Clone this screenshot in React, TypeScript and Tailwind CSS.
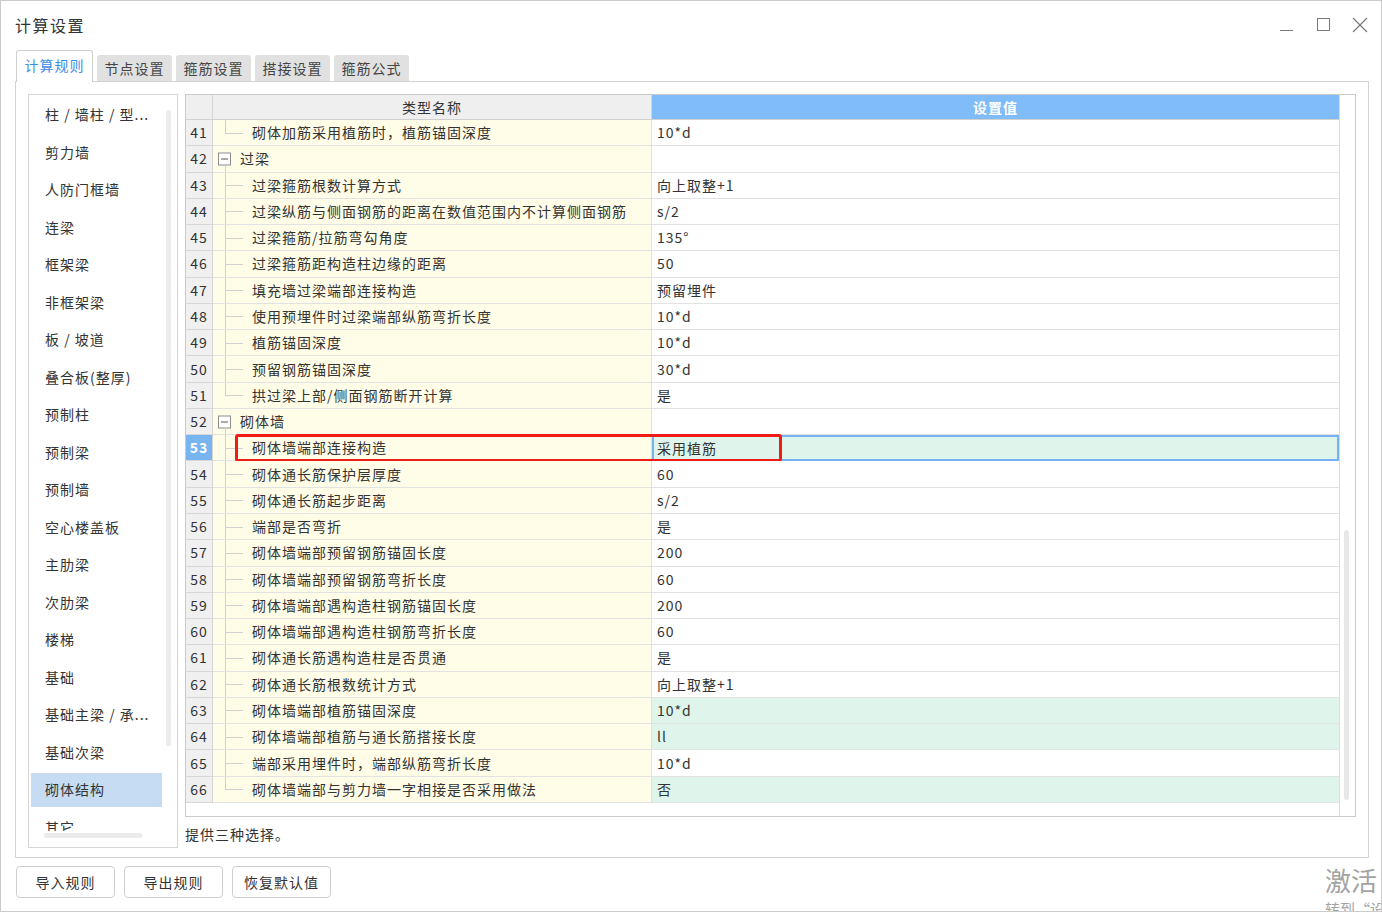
import React from "react";

type Row = {
  n: number;
  name: string;
  value?: string;
  kind: "child" | "group";
  last?: boolean;
  mint?: boolean;
  selected?: boolean;
};

const rows: Row[] = [
  { n: 41, name: "砌体加筋采用植筋时，植筋锚固深度", value: "10*d", kind: "child", last: true },
  { n: 42, name: "过梁", kind: "group" },
  { n: 43, name: "过梁箍筋根数计算方式", value: "向上取整+1", kind: "child" },
  { n: 44, name: "过梁纵筋与侧面钢筋的距离在数值范围内不计算侧面钢筋", value: "s/2", kind: "child" },
  { n: 45, name: "过梁箍筋/拉筋弯勾角度", value: "135°", kind: "child" },
  { n: 46, name: "过梁箍筋距构造柱边缘的距离", value: "50", kind: "child" },
  { n: 47, name: "填充墙过梁端部连接构造", value: "预留埋件", kind: "child" },
  { n: 48, name: "使用预埋件时过梁端部纵筋弯折长度", value: "10*d", kind: "child" },
  { n: 49, name: "植筋锚固深度", value: "10*d", kind: "child" },
  { n: 50, name: "预留钢筋锚固深度", value: "30*d", kind: "child" },
  { n: 51, name: "拱过梁上部/侧面钢筋断开计算", value: "是", kind: "child", last: true },
  { n: 52, name: "砌体墙", kind: "group" },
  { n: 53, name: "砌体墙端部连接构造", value: "采用植筋", kind: "child", mint: true, selected: true },
  { n: 54, name: "砌体通长筋保护层厚度", value: "60", kind: "child" },
  { n: 55, name: "砌体通长筋起步距离", value: "s/2", kind: "child" },
  { n: 56, name: "端部是否弯折", value: "是", kind: "child" },
  { n: 57, name: "砌体墙端部预留钢筋锚固长度", value: "200", kind: "child" },
  { n: 58, name: "砌体墙端部预留钢筋弯折长度", value: "60", kind: "child" },
  { n: 59, name: "砌体墙端部遇构造柱钢筋锚固长度", value: "200", kind: "child" },
  { n: 60, name: "砌体墙端部遇构造柱钢筋弯折长度", value: "60", kind: "child" },
  { n: 61, name: "砌体通长筋遇构造柱是否贯通", value: "是", kind: "child" },
  { n: 62, name: "砌体通长筋根数统计方式", value: "向上取整+1", kind: "child" },
  { n: 63, name: "砌体墙端部植筋锚固深度", value: "10*d", kind: "child", mint: true },
  { n: 64, name: "砌体墙端部植筋与通长筋搭接长度", value: "ll", kind: "child", mint: true },
  { n: 65, name: "端部采用埋件时，端部纵筋弯折长度", value: "10*d", kind: "child" },
  { n: 66, name: "砌体墙端部与剪力墙一字相接是否采用做法", value: "否", kind: "child", last: true, mint: true },
];

const categories = [
  "柱 / 墙柱 / 型...",
  "剪力墙",
  "人防门框墙",
  "连梁",
  "框架梁",
  "非框架梁",
  "板 / 坡道",
  "叠合板(整厚)",
  "预制柱",
  "预制梁",
  "预制墙",
  "空心楼盖板",
  "主肋梁",
  "次肋梁",
  "楼梯",
  "基础",
  "基础主梁 / 承...",
  "基础次梁",
  "砌体结构",
  "其它",
];

const tabs = ["计算规则", "节点设置", "箍筋设置", "搭接设置", "箍筋公式"];

function TreeCell({ row }: { row: Row }) {
  if (row.kind === "group") {
    return (
      <div className="relative flex h-full items-center pl-[27px]">
        <div className="absolute left-[5px] top-1/2 flex h-[13px] w-[13px] -translate-y-1/2 items-center justify-center border border-[#8c8c8c] bg-white">
          <div className="h-px w-[7px] bg-[#555]" />
        </div>
        <div className="absolute bottom-0 left-[12px] h-[6px] w-px bg-[#d0d0d0]" />
        <span>{row.name}</span>
      </div>
    );
  }
  return (
    <div className="relative flex h-full items-center pl-[39px]">
      <div
        className={
          row.last
            ? "absolute left-[12px] top-0 h-1/2 w-px bg-[#d0d0d0]"
            : "absolute left-[12px] top-0 h-full w-px bg-[#d0d0d0]"
        }
      />
      <div className="absolute left-[12px] top-1/2 h-px w-[18px] bg-[#d0d0d0]" />
      <span className="whitespace-nowrap">{row.name}</span>
    </div>
  );
}

function TableRow({ row }: { row: Row }) {
  return (
    <div className="relative grid h-[26.28px] grid-cols-[27px_439px_687px]">
      <div
        className={
          row.selected
            ? "flex items-center justify-center border-b border-r border-[#d6d6d6] bg-[#78b4f0] font-bold text-white"
            : "flex items-center justify-center border-b border-r border-[#d6d6d6] bg-[#f0f0f0]"
        }
      >
        {row.n}
      </div>
      <div className="border-b border-r border-[#e2e2e2] bg-[#fffde8]">
        <TreeCell row={row} />
      </div>
      <div
        className={
          row.selected
            ? "flex items-center border-2 border-[#74b2f2] bg-[#dff5ec] pl-[3px]"
            : row.mint
              ? "flex items-center border-b border-[#e2e2e2] bg-[#dff5ec] pl-[5px]"
              : "flex items-center border-b border-[#e2e2e2] bg-white pl-[5px]"
        }
      >
        {row.value}
      </div>
      {row.selected && (
        <div className="pointer-events-none absolute left-[49px] top-[-1px] h-[28px] w-[547px] rounded-[3px] border-[3px] border-[#ee1c14]" />
      )}
    </div>
  );
}

export default function App() {
  return (
    <div className="relative h-[912px] w-[1382px] overflow-hidden border border-[#cbcbcb] bg-white px-[14px] font-['Noto_Sans_CJK_SC',sans-serif] text-[14px] tracking-[1px] text-[#333]">
      {/* title bar */}
      <div className="flex h-[49px] items-start justify-between pt-[11px]">
        <span className="text-[16px] leading-[26px] tracking-[1.5px] text-[#333]">计算设置</span>
        <div className="mr-[-2px] mt-[4px] flex items-center gap-[20px]">
          <svg width="16" height="16" viewBox="0 0 16 16" className="mt-[2px]">
            <line x1="1" y1="12.5" x2="14" y2="12.5" stroke="#7a7a7a" strokeWidth="1" />
          </svg>
          <svg width="16" height="16" viewBox="0 0 16 16">
            <rect x="2.5" y="1.5" width="12" height="12" fill="none" stroke="#7a7a7a" strokeWidth="1" />
          </svg>
          <svg width="18" height="18" viewBox="0 0 18 18">
            <line x1="2" y1="2" x2="16" y2="16" stroke="#7a7a7a" strokeWidth="1.2" />
            <line x1="16" y1="2" x2="2" y2="16" stroke="#7a7a7a" strokeWidth="1.2" />
          </svg>
        </div>
      </div>

      {/* tabs */}
      <div className="ml-[1px] flex h-[31px] items-end gap-[4px]">
        {tabs.map((t, i) =>
          i === 0 ? (
            <div
              key={t}
              className="relative z-10 -mb-px flex h-[32px] w-[77px] items-center justify-center rounded-t-[3px] border border-b-0 border-[#cfcfcf] bg-white pb-[2px] text-[#3b8de6]"
            >
              {t}
            </div>
          ) : (
            <div
              key={t}
              className="flex h-[26px] w-[75px] items-center justify-center rounded-t-[3px] bg-[#e1e1e1] text-[#444]"
            >
              {t}
            </div>
          )
        )}
      </div>

      {/* panel */}
      <div className="flex h-[777px] w-[1354px] gap-[7px] border border-[#d3d3d3] pl-[12px] pt-[12px]">
        {/* category list */}
        <div className="relative h-[754px] w-[150px] border border-[#d6d6d6]">
          <div className="h-[736px] overflow-hidden pt-[1px]">
            {categories.map((c) => (
              <div key={c} className="h-[37.5px] px-[2px] py-[1.75px]">
                <div
                  className={
                    c === "砌体结构"
                      ? "flex h-full w-[131px] items-center bg-[#c6dcf2] pl-[14px] whitespace-nowrap"
                      : "flex h-full w-[131px] items-center pl-[14px] whitespace-nowrap"
                  }
                >
                  {c}
                </div>
              </div>
            ))}
          </div>
          <div className="absolute left-[137px] top-[15px] h-[636px] w-[5px] rounded-full bg-[#ececec]" />
          <div className="absolute left-[15px] top-[738px] h-[5px] w-[98px] rounded-full bg-[#ebebeb]" />
        </div>

        {/* table area */}
        <div className="flex flex-col">
          <div className="flex h-[723px] w-[1171px] border border-[#cacaca]">
            <div className="flex w-[1153px] flex-col">
              <div className="grid h-[25px] grid-cols-[27px_439px_687px] border-b border-[#d0d0d0]">
                <div className="border-r border-[#d6d6d6] bg-[#efefef]" />
                <div className="flex items-center justify-center border-r border-[#d6d6d6] bg-[#efefef] text-[#333]">
                  类型名称
                </div>
                <div className="flex items-center justify-center bg-[#80bcf7] font-bold text-white">
                  设置值
                </div>
              </div>
              {rows.map((r) => (
                <TableRow key={r.n} row={r} />
              ))}
            </div>
            <div className="relative w-[16px] border-l border-[#dcdcdc]">
              <div className="absolute left-[4px] top-[435px] h-[270px] w-[5px] rounded-full bg-[#e8e8e8]" />
            </div>
          </div>
          <div className="mt-[7px] leading-[20px]">提供三种选择。</div>
        </div>
      </div>

      {/* buttons */}
      <div className="ml-[1px] mt-[8px] flex gap-[9px]">
        {["导入规则", "导出规则", "恢复默认值"].map((b) => (
          <div
            key={b}
            className="flex h-[32px] w-[99px] items-center justify-center rounded-[4px] border border-[#cfcfcf] bg-white text-[#333]"
          >
            {b}
          </div>
        ))}
      </div>

      {/* activation watermark */}
      <div className="absolute left-[1324px] top-[866px] leading-none text-[#a3a3a3]">
        <div className="text-[26px] tracking-[0px]">激活</div>
        <div className="mt-[8px] whitespace-nowrap text-[15px] tracking-[0px]">转到“设置”</div>
      </div>
    </div>
  );
}
